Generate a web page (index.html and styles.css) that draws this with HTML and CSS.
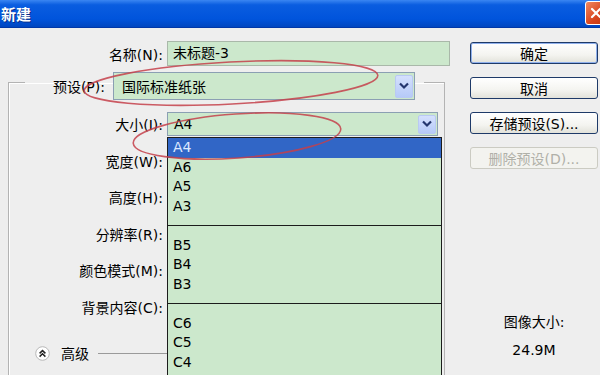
FILE: index.html
```html
<!DOCTYPE html>
<html>
  <head>
    <meta charset="utf-8">
    <title>新建</title>
    <link rel="stylesheet" href="styles.css">
  </head>
  <body>
    <div class="window">
      <div class="titlebar">
        <span class="title">新建</span>
        <span class="close">
          <svg width="12" height="12" viewBox="0 0 12 12"><path d="M2 2 L10 10 M10 2 L2 10" stroke="#fff" stroke-width="2.2" stroke-linecap="round"/></svg>
        </span>
      </div>

      <div class="content">
        <div class="main">
          <div class="row row-name">
            <label class="lbl">名称(N):</label>
            <div class="field">未标题-3</div>
          </div>

          <fieldset class="group">
            <legend class="preset">
              <label class="lbl preset-lbl">预设(P):</label>
              <div class="select preset-select">
                <span>国际标准纸张</span>
                <span class="arrow"><svg width="12" height="8" viewBox="0 0 12 8"><path d="M2 1.5 L6 5.5 L10 1.5" fill="none" stroke="#24366e" stroke-width="2.2"/></svg></span>
              </div>
            </legend>

            <div class="rows">
              <div class="row">
                <label class="lbl">大小(I):</label>
                <div class="select size-select">
                  <span>A4</span>
                  <span class="arrow"><svg width="12" height="8" viewBox="0 0 12 8"><path d="M2 1.5 L6 5.5 L10 1.5" fill="none" stroke="#24366e" stroke-width="2.2"/></svg></span>
                </div>
              </div>
              <div class="row">
                <label class="lbl">宽度(W):</label>
              </div>
              <div class="row">
                <label class="lbl">高度(H):</label>
              </div>
              <div class="row">
                <label class="lbl">分辨率(R):</label>
              </div>
              <div class="row">
                <label class="lbl">颜色模式(M):</label>
              </div>
              <div class="row">
                <label class="lbl">背景内容(C):</label>
              </div>
              <div class="advanced">
                <svg width="15" height="15" viewBox="0 0 15 15">
                  <circle cx="7.5" cy="7.5" r="6.8" fill="#fff" stroke="#b8b8b8"/>
                  <path d="M4.6 7.4 L7.5 4.6 L10.4 7.4 M4.6 10.6 L7.5 7.8 L10.4 10.6" fill="none" stroke="#222" stroke-width="1.5"/>
                </svg>
                <span>高级</span>
                <span class="adv-line"></span>
              </div>
            </div>
          </fieldset>
        </div>

        <div class="side">
          <button class="btn btn-default">确定</button>
          <button class="btn">取消</button>
          <button class="btn">存储预设(S)...</button>
          <button class="btn" disabled>删除预设(D)...</button>
          <div class="info">
            <p>图像大小:</p>
            <p>24.9M</p>
          </div>
        </div>
      </div>

      <!-- open size list -->
      <div class="list">
        <div class="item selected">A4</div>
        <div class="item">A6</div>
        <div class="item">A5</div>
        <div class="item">A3</div>
        <div class="sep"></div>
        <div class="item">B5</div>
        <div class="item">B4</div>
        <div class="item">B3</div>
        <div class="sep"></div>
        <div class="item">C6</div>
        <div class="item">C5</div>
        <div class="item">C4</div>
      </div>

      <svg class="marks" width="600" height="375" viewBox="0 0 600 375">
        <ellipse cx="231" cy="83" rx="147" ry="21" transform="rotate(-3 231 83)"/>
        <ellipse cx="237" cy="136" rx="104" ry="22" transform="rotate(-4 237 136)"/>
      </svg>
    </div>
  </body>
</html>
```

FILE: styles.css
```css
* {
  box-sizing: border-box;
}

body {
  margin: 0;
  font-family: "DejaVu Sans", "Noto Sans CJK SC", sans-serif;
  font-size: 14px;
  color: #000;
}

.window {
  position: relative;
  width: 600px;
  height: 375px;
  overflow: hidden;
  background: #eeeeee;
}

.titlebar {
  height: 28px;
  display: flex;
  justify-content: space-between;
  align-items: flex-start;
  background: linear-gradient(#3a86f2, #0a5de0 18%, #0054dc 70%, #0046c0);
  border-bottom: 1px solid #0038a8;
}

.title {
  font-family: "Noto Sans CJK SC", sans-serif;
  font-weight: bold;
  font-size: 15px;
  line-height: 27px;
  color: #fff;
  padding-left: 1px;
  text-shadow: 1px 1px 0 #0a2f8a;
}

.close {
  width: 22px;
  height: 24px;
  margin: 1px -7px 0 0;
  border: 1px solid #fff;
  border-radius: 3px;
  background: linear-gradient(135deg, #f08a62, #d8431d 60%, #c2380f);
  display: flex;
  align-items: center;
  justify-content: center;
}

.content {
  display: flex;
  height: 347px;
}

.main {
  width: 455px;
  padding-top: 13px;
}

.row {
  display: grid;
  grid-template-columns: 154px 271px;
  column-gap: 4px;
  align-items: center;
  height: 24px;
}

.row-name {
  grid-template-columns: 163px 283px;
  height: 25px;
}

.lbl {
  text-align: right;
  white-space: nowrap;
}

.field {
  height: 25px;
  line-height: 23px;
  padding-left: 5px;
  background: #cce8cc;
  border: 1px solid #a9b8a9;
}

.group {
  margin: -2px 10px 0 8px;
  padding: 12px 0 60px 0;
  border: 1px solid #b3b3b3;
  box-shadow: inset 1px 1px 0 #fff;
  min-width: 0;
}

.preset {
  display: flex;
  align-items: center;
  margin-left: 16px;
  padding: 8px 9px 0 0;
}

.preset-lbl {
  width: 80px;
}

.select {
  display: flex;
  align-items: center;
  justify-content: space-between;
  background: #cce8cc;
  border: 1px solid #8b9fb3;
  padding-left: 8px;
  padding-right: 1px;
}

.preset-select {
  margin-left: 8px;
  width: 302px;
  height: 28px;
}

.size-select {
  height: 24px;
  padding-left: 6px;
}

.arrow {
  width: 18px;
  height: calc(100% - 3px);
  display: flex;
  align-items: center;
  justify-content: center;
  background: linear-gradient(#d4e0fd, #b6caf8);
  border: 1px solid #b9c9f3;
  border-radius: 2px;
}

.rows {
  display: flex;
  flex-direction: column;
  gap: 12.5px;
}

.advanced {
  display: flex;
  align-items: center;
  height: 24px;
  margin-top: 10px;
  padding-left: 26px;
}

.advanced span {
  font-family: "Noto Sans CJK SC", sans-serif;
  margin-left: 11px;
}

.advanced .adv-line {
  flex: 1;
  height: 1px;
  margin-left: 9px;
  margin-right: 150px;
  background: #9a9a9a;
}

.side {
  width: 145px;
  padding: 14px 0 0 15px;
  display: flex;
  flex-direction: column;
  gap: 13px;
}

.btn {
  width: 128px;
  height: 22px;
  padding: 0;
  font-family: "DejaVu Sans", "Noto Sans CJK SC", sans-serif;
  font-size: 14px;
  color: #000;
  background: linear-gradient(#ffffff, #f4f4f0 60%, #e2e2da);
  border: 1px solid #1e3a68;
  border-radius: 3px;
}

.btn-default {
  box-shadow: inset 0 0 0 1px #8fb0ec;
}

.btn:disabled {
  color: #b0b0a8;
  border-color: #cbcbc2;
  background: #f3f3ef;
}

.info {
  width: 128px;
  margin-top: 129px;
  text-align: center;
}

.info p {
  margin: 0 0 6px;
  line-height: 22px;
}

.list {
  position: absolute;
  left: 167px;
  top: 137px;
  width: 275px;
  height: 250px;
  background: #cce8cc;
  border: 1px solid #1c1c1c;
}

.item {
  height: 19.5px;
  line-height: 19.5px;
  padding-left: 5px;
}

.item.selected {
  background: #3166c6;
  color: #dce8ff;
}

.sep {
  height: 19.5px;
  background: linear-gradient(#1c1c1c, #1c1c1c) center / 100% 1px no-repeat;
}

.marks {
  position: absolute;
  left: 0;
  top: 0;
  pointer-events: none;
}

.marks ellipse {
  fill: none;
  stroke: #c4404a;
  stroke-width: 1.6;
  opacity: 0.85;
}
```
